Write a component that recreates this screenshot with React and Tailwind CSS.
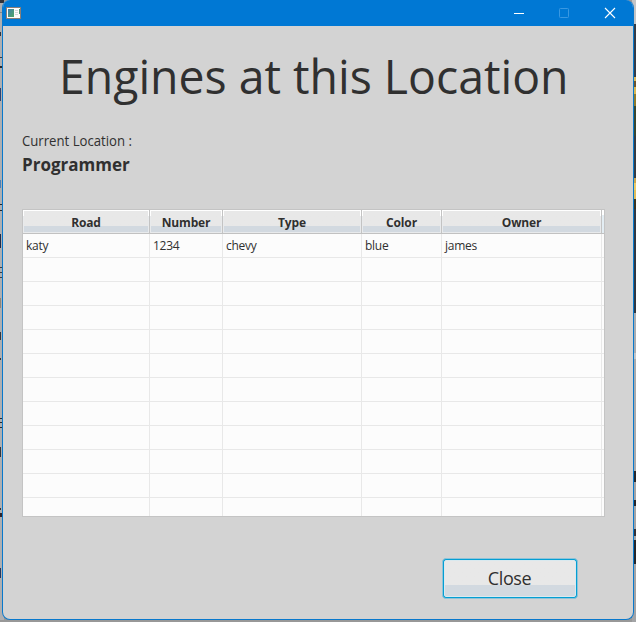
const columns = [
  { name: 'Road', width: 'w-[127px]', value: 'katy' },
  { name: 'Number', width: 'w-[73px]', value: '1234' },
  { name: 'Type', width: 'w-[139px]', value: 'chevy' },
  { name: 'Color', width: 'w-[80px]', value: 'blue' },
  { name: 'Owner', width: 'w-[160px]', value: 'james' },
];

// [y, height, fill, width]
const leftMarks = [
  [0, 3, '#30323a', 4], [12, 1, '#85878a', 2], [32, 4, '#30353d', 1], [57, 1, '#3b3d42', 2], [66, 2, '#26292e', 2],
  [88, 13, '#2c4272', 1], [180, 8, '#4c7fb5', 1], [204, 1, '#23252a', 2], [210, 1, '#23252a', 2], [234, 14, '#202b48', 1],
  [267, 1, '#3c3e42', 2], [272, 1, '#3c3e42', 2], [277, 1, '#3c3e42', 2], [298, 10, '#8f8578', 1], [332, 8, '#33373d', 1],
  [358, 2, '#33373d', 1], [418, 1, '#26292e', 2], [422, 1, '#26292e', 2], [427, 1, '#26292e', 2],
  [447, 10, '#33363c', 1], [508, 2, '#31343b', 1], [513, 4, '#30242b', 2], [568, 10, '#26375e', 1],
];

const rightMarks = [
  [0, 24, '#c3c4c6', 4], [24, 53, '#333c48', 4], [77, 4, '#dcb95c', 4], [81, 6, '#6c542d', 4], [87, 7, '#d9b753', 4],
  [94, 12, '#8f7b2c', 4], [106, 30, '#38462f', 4], [136, 42, '#343b43', 4], [178, 5, '#c8a44f', 4], [183, 7, '#eccb68', 4],
  [190, 9, '#e0bd5b', 4], [199, 10, '#3a3420', 4], [209, 104, '#2e3742', 4], [313, 40, '#a8adb2', 4], [353, 6, '#c4c6c8', 4],
  [359, 112, '#a9abad', 4], [471, 11, '#25262a', 4], [482, 18, '#a3a4a6', 4], [500, 6, '#25262a', 4],
  [506, 23, '#a3a4a6', 4], [529, 7, '#303138', 4], [536, 4, '#a3a4a6', 4], [540, 24, '#25262a', 4], [564, 58, '#a3a4a6', 4],
];

function Edge({ marks }) {
  return (
    <svg className="h-[622px] w-[4px]" viewBox="0 0 4 622" shapeRendering="crispEdges">
      <rect width="4" height="620" fill="#aeafb1" />
      {marks.map(([y, h, fill, w]) => (
        <rect key={y} x="0" y={y} width={w} height={h} fill={fill} />
      ))}
    </svg>
  );
}

function TitleBar() {
  return (
    <div className="flex h-[26px] shrink-0 items-center bg-[#0078d4]">
      <svg className="ml-[3px] h-3 w-4" viewBox="0 0 16 12" shapeRendering="crispEdges">
        <defs>
          <linearGradient id="pane" x1="0" y1="0" x2="1" y2="1">
            <stop offset="0" stopColor="#3f7fae" />
            <stop offset="1" stopColor="#4fa765" />
          </linearGradient>
        </defs>
        <rect width="15" height="12" fill="#8a7f78" />
        <rect x="1" y="1" width="13" height="10" fill="#fcfcfc" />
        <rect x="2" y="2" width="6" height="8" fill="url(#pane)" />
        <path d="M9 3.5h3M9 5.5h3M9 7.5h3" stroke="#d3d8dc" />
        <rect x="13" y="2" width="1" height="5" fill="#4b9277" />
      </svg>
      <div className="grow" />
      <svg className="mr-[16px] h-[12px] w-[104px]" viewBox="0 0 104 12">
        <path d="M1 6.5h10" stroke="#fff" fill="none" />
        <rect x="46.5" y="1.5" width="9" height="9" rx="0.8" stroke="#3998e2" fill="none" />
        <path d="M92 1l10 10M102 1L92 11" stroke="#fff" strokeWidth="1.1" fill="none" />
      </svg>
    </div>
  );
}

function HeaderCell({ children, width }) {
  return (
    <div className={`${width} h-full shrink-0 border-r border-[#c3c3c3] bg-linear-to-b from-white from-[25%] to-[#e8eaec] to-[26%] p-px`}>
      <div className="flex h-full items-center justify-center bg-linear-to-b from-[#e8e8e8] from-[73%] to-[#d2d9e0] to-[73%] pt-[2px] text-[12px] font-bold tracking-[-0.15px]">
        {children}
      </div>
    </div>
  );
}

function Table() {
  return (
    <div className="mt-[34px] ml-[19px] flex h-[308px] w-[583px] flex-col overflow-hidden border border-[#c4c4c4] bg-[#fcfcfc]">
      <div className="flex h-[24px] shrink-0 border-b border-[#c1c1c1] bg-linear-to-b from-white from-[22%] to-[#e3edf3] to-[23%]">
        {columns.map((c) => (
          <HeaderCell key={c.name} width={c.width}>{c.name}</HeaderCell>
        ))}
      </div>
      {Array.from({ length: 12 }, (_, row) => (
        <div key={row} className="flex h-[24px] shrink-0 border-b border-[#e8e8e8]">
          {columns.map((c) => (
            <div key={c.name} className={`${c.width} h-full shrink-0 border-r border-[#e8e8e8] pl-[3px] text-[12px] leading-[24px] tracking-[-0.25px]`}>
              {row === 0 ? c.value : ''}
            </div>
          ))}
        </div>
      ))}
    </div>
  );
}

export default function App() {
  return (
    <div className="grid h-[622px] w-[636px] overflow-hidden bg-[#989898] font-['Open_Sans','Noto_Sans',sans-serif] text-[#303030]">
      <div className="col-start-1 row-start-1 flex justify-between">
        <Edge marks={leftMarks} />
        <Edge marks={rightMarks} />
      </div>
      <div className="col-start-1 row-start-1 ml-[2px] flex h-[620px] w-[632px] flex-col overflow-hidden rounded-lg border border-t-0 border-[#0878cc] bg-[#d3d3d3]">
        <TitleBar />
        <h1 className="mt-[18px] ml-[56px] h-[64px] origin-left scale-x-[0.966] text-[48px] leading-[64px] whitespace-nowrap">Engines at this Location</h1>
        <p className="mt-[23px] ml-[19px] h-[20px] origin-left scale-x-[0.94] text-[14px] leading-[20px] whitespace-nowrap">Current Location :</p>
        <p className="mt-[2px] ml-[19px] h-[22px] origin-left scale-x-[0.945] text-[18px] leading-[22px] font-bold whitespace-nowrap">Programmer</p>
        <Table />
        <button className="mt-[41px] ml-[439px] h-[41px] w-[136px] rounded-[4px] border border-[#8fc3d8] bg-[#039ed3] p-px">
          <span className="flex h-full items-center justify-center rounded-[2px] border border-[#d9e9ef] bg-linear-to-b from-[#e8e8e8] from-[70%] to-[#d2d9e0] to-[70%] pr-px pb-px text-[18px] tracking-[-0.4px]">
            Close
          </span>
        </button>
      </div>
    </div>
  );
}
